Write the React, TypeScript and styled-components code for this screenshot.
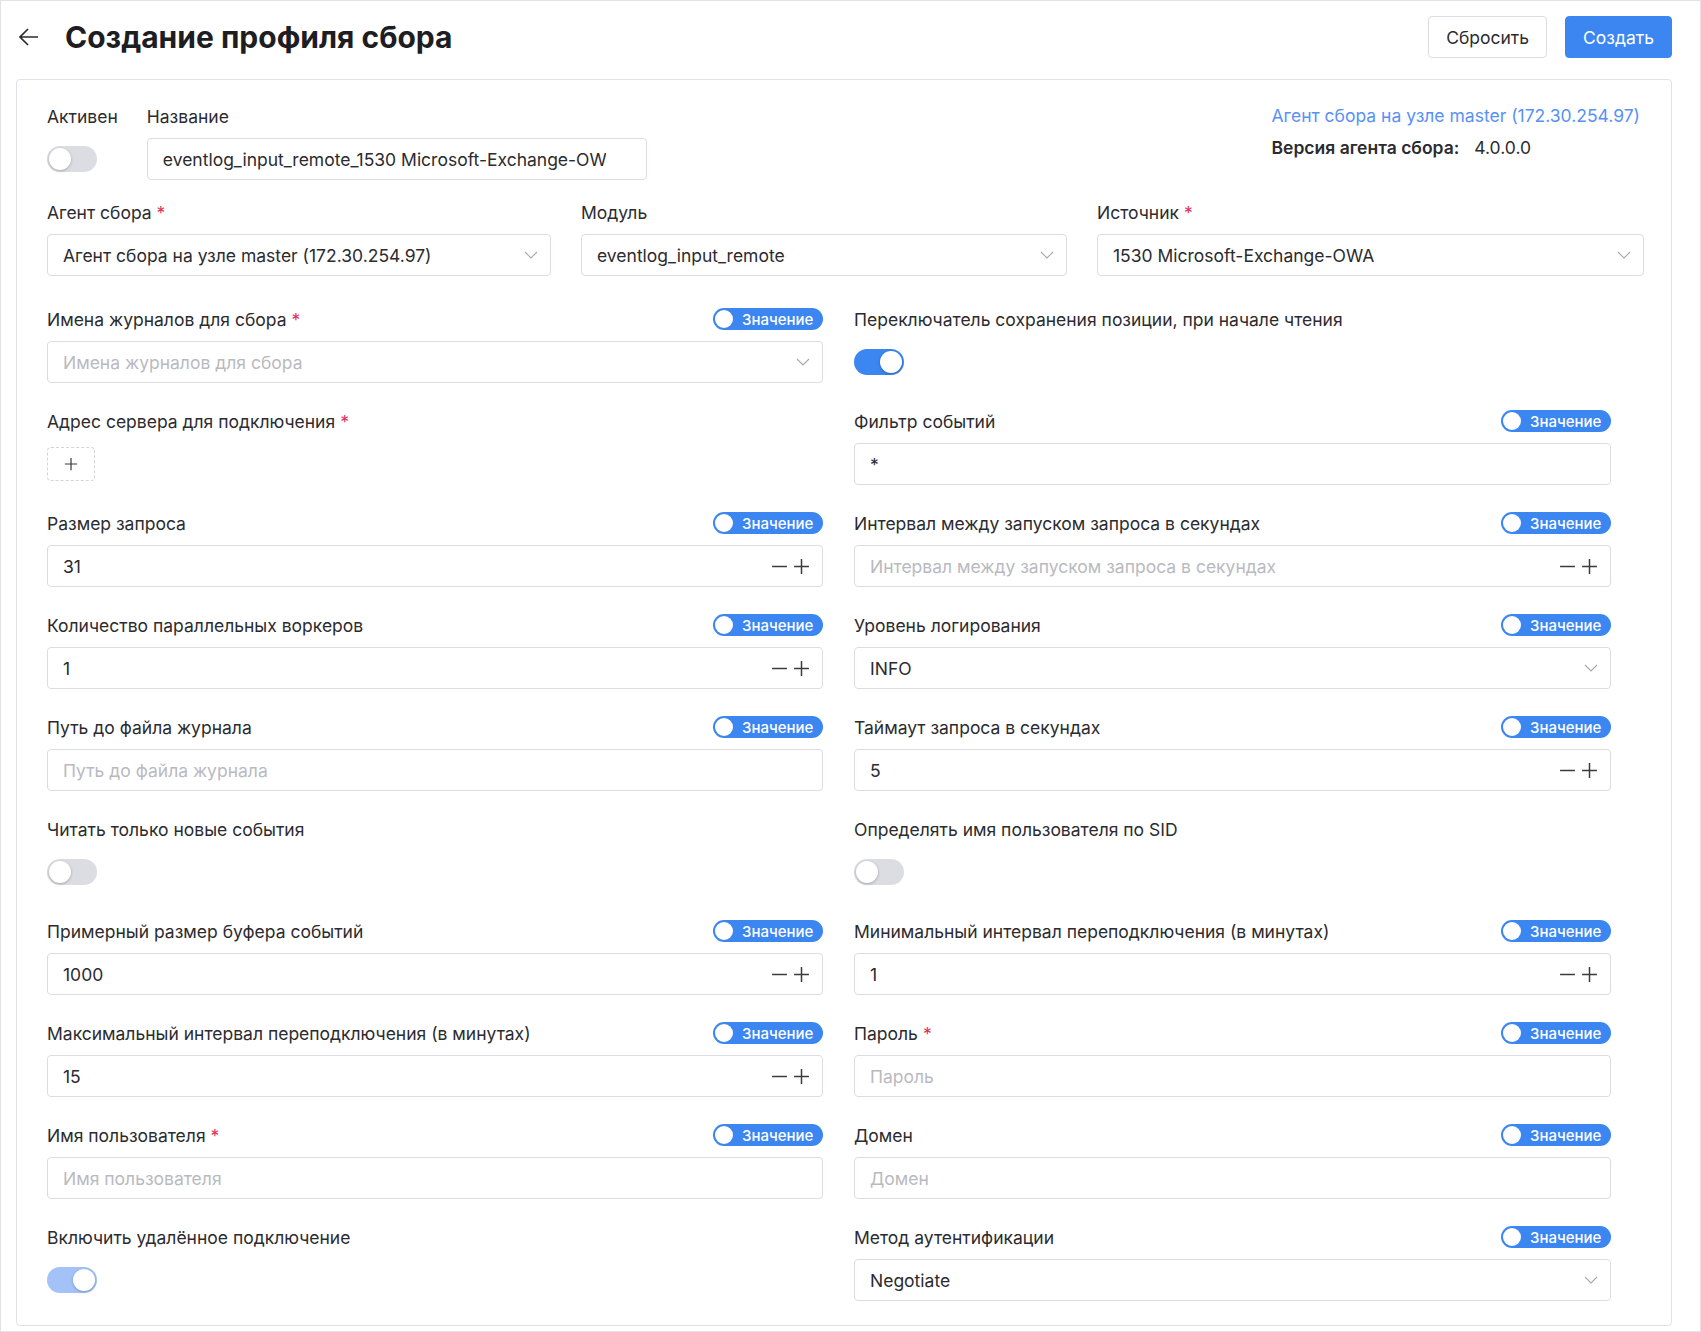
import React from 'react';
import styled, { createGlobalStyle } from 'styled-components';

const GlobalStyle = createGlobalStyle`
  * { box-sizing: border-box; }
  html, body { margin: 0; padding: 0; height: 100%; overflow: hidden; background: #fff; }
  body {
    font-family: Inter, 'Noto Sans', sans-serif;
    color: #2b2b30;
    font-size: 17.5px;
  }
`;

const Page = styled.div`
  height: 100vh;
  border: 1px solid #e1e2e6;
  padding: 0 28px 0 15px;
  overflow: hidden;
`;

const Header = styled.header`
  height: 72px;
  display: flex;
  align-items: center;
  margin-bottom: 6px;
`;

const BackButton = styled.button`
  width: 26px;
  height: 26px;
  padding: 0;
  border: 0;
  background: none;
  color: #2b2b30;
  display: flex;
  align-items: center;
  justify-content: center;
  cursor: pointer;
`;

const Title = styled.h1`
  margin: 0 0 0 23px;
  font-size: 30px;
  font-weight: 700;
  color: #1d1d22;
  flex: 1;
`;

const Button = styled.button<{ $primary?: boolean }>`
  height: 42px;
  padding: 0 17px;
  margin-left: 18px;
  border-radius: 4px;
  font-family: inherit;
  font-size: 17.5px;
  cursor: pointer;
  border: 1px solid ${(p) => (p.$primary ? '#3b86f1' : '#dcdde2')};
  background: ${(p) => (p.$primary ? '#3b86f1' : '#fff')};
  color: ${(p) => (p.$primary ? '#fff' : '#2b2b30')};
`;

const Card = styled.main`
  border: 1px solid #e1e2e7;
  border-radius: 4px;
  padding: 24px 28px 24px 30px;
`;

const TopRow = styled.div`
  display: flex;
  justify-content: space-between;
  margin-bottom: 20px;
`;

const TopLeft = styled.div`
  display: flex;
  gap: 29px;
`;

const Field = styled.div<{ $width?: number }>`
  display: flex;
  flex-direction: column;
  width: ${(p) => (p.$width ? `${p.$width}px` : 'auto')};
  min-width: 0;
`;

const LabelRow = styled.div`
  height: 24px;
  margin-bottom: 10px;
  display: flex;
  align-items: center;
  justify-content: space-between;
`;

const Label = styled.label`
  font-size: 17.5px;
  color: #2b2b30;
  white-space: nowrap;
`;

const Required = styled.span`
  color: #e2305c;
  margin-left: 5px;
`;

const Control = styled.div`
  height: 42px;
  display: flex;
  align-items: center;
`;

const TextInput = styled.input<{ $padRight?: number }>`
  width: 100%;
  height: 42px;
  border: 1px solid #dcdde3;
  border-radius: 4px;
  padding: 0 ${(p) => p.$padRight ?? 15}px 0 15px;
  font-family: inherit;
  font-size: 17.5px;
  color: #2b2b30;
  background: #fff;
  outline: none;
  &::placeholder { color: #b9bac0; }
`;

const InputBox = styled.div`
  width: 100%;
  height: 42px;
  border: 1px solid #dcdde3;
  border-radius: 4px;
  display: flex;
  align-items: center;
  padding: 0 12px 0 15px;
  background: #fff;
`;

const BareInput = styled.input`
  flex: 1;
  min-width: 0;
  border: 0;
  padding: 0;
  outline: none;
  font-family: inherit;
  font-size: 17.5px;
  color: #2b2b30;
  background: transparent;
  &::placeholder { color: #b9bac0; }
`;

const SelectText = styled.span<{ $placeholder?: boolean }>`
  flex: 1;
  font-size: 17.5px;
  white-space: nowrap;
  color: ${(p) => (p.$placeholder ? '#b9bac0' : '#2b2b30')};
`;

const Steppers = styled.div`
  display: flex;
  align-items: center;
  gap: 5px;
  color: #3a3a40;
`;

const Switch = styled.span<{ $on?: boolean; $disabled?: boolean }>`
  position: relative;
  display: inline-block;
  width: 50px;
  height: 26px;
  border-radius: 13px;
  background: ${(p) => (p.$on ? (p.$disabled ? '#a3c3f8' : '#3b86f1') : '#dcdde2')};
  &::after {
    content: '';
    position: absolute;
    top: 2px;
    left: ${(p) => (p.$on ? '26px' : '2px')};
    width: 22px;
    height: 22px;
    border-radius: 50%;
    background: #fff;
    box-shadow: 0 1px 3px rgba(0, 0, 0, 0.25);
  }
`;

const ValuePill = styled.span`
  position: relative;
  display: inline-flex;
  align-items: center;
  height: 22px;
  width: 110px;
  border-radius: 11px;
  background: #3b86f1;
  color: #fff;
  font-size: 15px;
  font-weight: 500;
  padding-left: 29px;
  &::before {
    content: '';
    position: absolute;
    left: 2px;
    top: 2px;
    width: 18px;
    height: 18px;
    border-radius: 50%;
    background: #fff;
  }
`;

const AddButton = styled.button`
  width: 48px;
  height: 34px;
  border: 1px dashed #d3d4da;
  border-radius: 4px;
  background: #fff;
  color: #3a3a40;
  display: flex;
  align-items: center;
  justify-content: center;
  padding: 0;
`;

const InfoBlock = styled.div`
  padding-right: 3px;
  display: flex;
  flex-direction: column;
`;

const AgentLink = styled.a`
  height: 24px;
  line-height: 24px;
  font-size: 17.5px;
  color: #5891f5;
  text-decoration: none;
  margin-bottom: 8px;
`;

const VersionLine = styled.div`
  font-size: 17.5px;
  line-height: 24px;
  display: flex;
  gap: 15px;
  b { font-weight: 600; }
`;

const SelectRow = styled.div`
  display: grid;
  grid-template-columns: 504px 486px 547px;
  column-gap: 30px;
  margin-bottom: 31px;
`;

const FormGrid = styled.div`
  display: grid;
  grid-template-columns: 776px 757px;
  column-gap: 31px;
  row-gap: 26px;
`;

const Chevron = () => (
  <svg width="14" height="8" viewBox="0 0 14 8" fill="none">
    <path d="M1 1l6 6 6-6" stroke="#a8a9b0" strokeWidth="1.1" />
  </svg>
);

const Plus = ({ size = 17 }: { size?: number }) => (
  <svg width={size} height={size} viewBox="0 0 16 16" fill="none">
    <path d="M8 1v14M1 8h14" stroke="currentColor" strokeWidth="1.4" />
  </svg>
);

const Minus = () => (
  <svg width="17" height="17" viewBox="0 0 16 16" fill="none">
    <path d="M1 8h14" stroke="currentColor" strokeWidth="1.4" />
  </svg>
);

type Kind = 'select' | 'input' | 'number' | 'switch' | 'add';

type FieldDef = {
  label: string;
  kind: Kind;
  required?: boolean;
  pill?: boolean;
  value?: string;
  placeholder?: string;
  on?: boolean;
  disabled?: boolean;
};

const fields: FieldDef[] = [
  { label: 'Имена журналов для сбора', kind: 'select', required: true, pill: true, placeholder: 'Имена журналов для сбора' },
  { label: 'Переключатель сохранения позиции, при начале чтения', kind: 'switch', on: true },
  { label: 'Адрес сервера для подключения', kind: 'add', required: true },
  { label: 'Фильтр событий', kind: 'input', pill: true, value: '*' },
  { label: 'Размер запроса', kind: 'number', pill: true, value: '31' },
  { label: 'Интервал между запуском запроса в секундах', kind: 'number', pill: true, placeholder: 'Интервал между запуском запроса в секундах' },
  { label: 'Количество параллельных воркеров', kind: 'number', pill: true, value: '1' },
  { label: 'Уровень логирования', kind: 'select', pill: true, value: 'INFO' },
  { label: 'Путь до файла журнала', kind: 'input', pill: true, placeholder: 'Путь до файла журнала' },
  { label: 'Таймаут запроса в секундах', kind: 'number', pill: true, value: '5' },
  { label: 'Читать только новые события', kind: 'switch' },
  { label: 'Определять имя пользователя по SID', kind: 'switch' },
  { label: 'Примерный размер буфера событий', kind: 'number', pill: true, value: '1000' },
  { label: 'Минимальный интервал переподключения (в минутах)', kind: 'number', pill: true, value: '1' },
  { label: 'Максимальный интервал переподключения (в минутах)', kind: 'number', pill: true, value: '15' },
  { label: 'Пароль', kind: 'input', required: true, pill: true, placeholder: 'Пароль' },
  { label: 'Имя пользователя', kind: 'input', required: true, pill: true, placeholder: 'Имя пользователя' },
  { label: 'Домен', kind: 'input', pill: true, placeholder: 'Домен' },
  { label: 'Включить удалённое подключение', kind: 'switch', on: true, disabled: true },
  { label: 'Метод аутентификации', kind: 'select', pill: true, value: 'Negotiate' },
];

function SelectBox({ value, placeholder }: { value?: string; placeholder?: string }) {
  return (
    <InputBox>
      <SelectText $placeholder={!value}>{value || placeholder}</SelectText>
      <Chevron />
    </InputBox>
  );
}

function renderControl(f: FieldDef) {
  switch (f.kind) {
    case 'select':
      return <SelectBox value={f.value} placeholder={f.placeholder} />;
    case 'input':
      return <TextInput readOnly value={f.value ?? ''} placeholder={f.placeholder} />;
    case 'number':
      return (
        <InputBox>
          <BareInput readOnly value={f.value ?? ''} placeholder={f.placeholder} />
          <Steppers>
            <Minus />
            <Plus />
          </Steppers>
        </InputBox>
      );
    case 'switch':
      return <Switch $on={f.on} $disabled={f.disabled} />;
    case 'add':
      return (
        <AddButton>
          <Plus size={14} />
        </AddButton>
      );
  }
}

function FormField({ f }: { f: FieldDef }) {
  return (
    <Field>
      <LabelRow>
        <Label>
          {f.label}
          {f.required && <Required>*</Required>}
        </Label>
        {f.pill && <ValuePill>Значение</ValuePill>}
      </LabelRow>
      <Control>{renderControl(f)}</Control>
    </Field>
  );
}

export default function App() {
  return (
    <>
      <GlobalStyle />
      <Page>
        <Header>
          <BackButton>
            <svg width="24" height="24" viewBox="0 0 24 24" fill="none">
              <path d="M21 12H3M11 4l-8 8 8 8" stroke="currentColor" strokeWidth="1.7" />
            </svg>
          </BackButton>
          <Title>Создание профиля сбора</Title>
          <Button>Сбросить</Button>
          <Button $primary>Создать</Button>
        </Header>
        <Card>
          <TopRow>
            <TopLeft>
              <Field>
                <LabelRow>
                  <Label>Активен</Label>
                </LabelRow>
                <Control>
                  <Switch />
                </Control>
              </Field>
              <Field $width={500}>
                <LabelRow>
                  <Label>Название</Label>
                </LabelRow>
                <Control>
                  <TextInput
                    $padRight={40}
                    readOnly
                    value="eventlog_input_remote_1530 Microsoft-Exchange-OWA"
                  />
                </Control>
              </Field>
            </TopLeft>
            <InfoBlock>
              <AgentLink href="#">Агент сбора на узле master (172.30.254.97)</AgentLink>
              <VersionLine>
                <b>Версия агента сбора:</b>
                <span>4.0.0.0</span>
              </VersionLine>
            </InfoBlock>
          </TopRow>
          <SelectRow>
            <Field>
              <LabelRow>
                <Label>
                  Агент сбора<Required>*</Required>
                </Label>
              </LabelRow>
              <Control>
                <SelectBox value="Агент сбора на узле master (172.30.254.97)" />
              </Control>
            </Field>
            <Field>
              <LabelRow>
                <Label>Модуль</Label>
              </LabelRow>
              <Control>
                <SelectBox value="eventlog_input_remote" />
              </Control>
            </Field>
            <Field>
              <LabelRow>
                <Label>
                  Источник<Required>*</Required>
                </Label>
              </LabelRow>
              <Control>
                <SelectBox value="1530 Microsoft-Exchange-OWA" />
              </Control>
            </Field>
          </SelectRow>
          <FormGrid>
            {fields.map((f) => (
              <FormField key={f.label} f={f} />
            ))}
          </FormGrid>
        </Card>
      </Page>
    </>
  );
}
